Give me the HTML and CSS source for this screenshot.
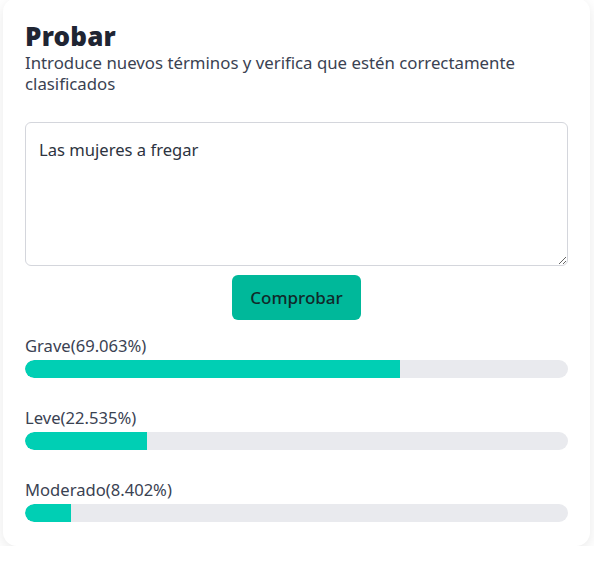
FILE: index.html
```html
<!DOCTYPE html>
<html lang="es">
<head>
<meta charset="utf-8">
<link rel="stylesheet" href="styles.css">
</head>
<body>
<div class="card">
  <h1 class="title">Probar</h1>
  <p class="subtitle">Introduce nuevos términos y verifica que estén correctamente clasificados</p>
  <textarea class="input">Las mujeres a fregar</textarea>
  <div class="actions"><button class="btn">Comprobar</button></div>
  <div class="results">
    <div class="result">
      <div class="label">Grave(69.063%)</div>
      <div class="track"><div class="fill" style="width:69.063%"></div></div>
    </div>
    <div class="result">
      <div class="label">Leve(22.535%)</div>
      <div class="track"><div class="fill" style="width:22.535%"></div></div>
    </div>
    <div class="result">
      <div class="label">Moderado(8.402%)</div>
      <div class="track"><div class="fill" style="width:8.402%"></div></div>
    </div>
  </div>
</div>
</body>
</html>
```
FILE: styles.css
```css
html, body {
  margin: 0;
  padding: 0;
  background: #ffffff;
}
body {
  font-family: "Noto Sans", "Open Sans", sans-serif;
  color: #374151;
}
.card {
  margin: -2px 4px 0 3px;
  background: #fff;
  border-radius: 14px;
  box-shadow: 0 4px 14px rgba(0,0,0,0.09);
  padding: 22px 22px 24px 22px;
}
.title {
  margin: 0;
  font-family: "Noto Sans", "Lato", sans-serif;
  font-weight: 900;
  font-size: 26px;
  line-height: 32px;
  letter-spacing: 0.2px;
  color: #1f2533;
}
.subtitle {
  margin: 0;
  font-size: 16.8px;
  line-height: 21px;
  color: #3a4252;
}
.input {
  display: block;
  box-sizing: border-box;
  width: 100%;
  height: 144px;
  margin-top: 28px;
  padding: 16px 13px;
  border: 1px solid #d4d6dc;
  border-radius: 6px;
  font-family: "Noto Sans", "Open Sans", sans-serif;
  font-size: 16.6px;
  line-height: 21px;
  color: #2d3340;
  resize: vertical;
  outline: none;
}
.actions {
  display: flex;
  justify-content: center;
  margin-top: 9px;
}
.btn {
  width: 129px;
  height: 45px;
  border: none;
  border-radius: 6px;
  background: #00b89a;
  color: #102a2a;
  font-family: "Noto Sans", "Open Sans", sans-serif;
  font-size: 17px;
  font-weight: 500;
  cursor: pointer;
}
.results {
  display: flex;
  flex-direction: column;
  gap: 29px;
  margin-top: 15px;
}
.label {
  font-size: 16.6px;
  line-height: 22px;
  color: #3a4252;
  margin-bottom: 3px;
}
.track {
  height: 18px;
  background: #e9eaee;
  border-radius: 9px;
  overflow: hidden;
}
.fill {
  height: 100%;
  background: #00cfb4;
  border-radius: 9px 0 0 9px;
}
```
